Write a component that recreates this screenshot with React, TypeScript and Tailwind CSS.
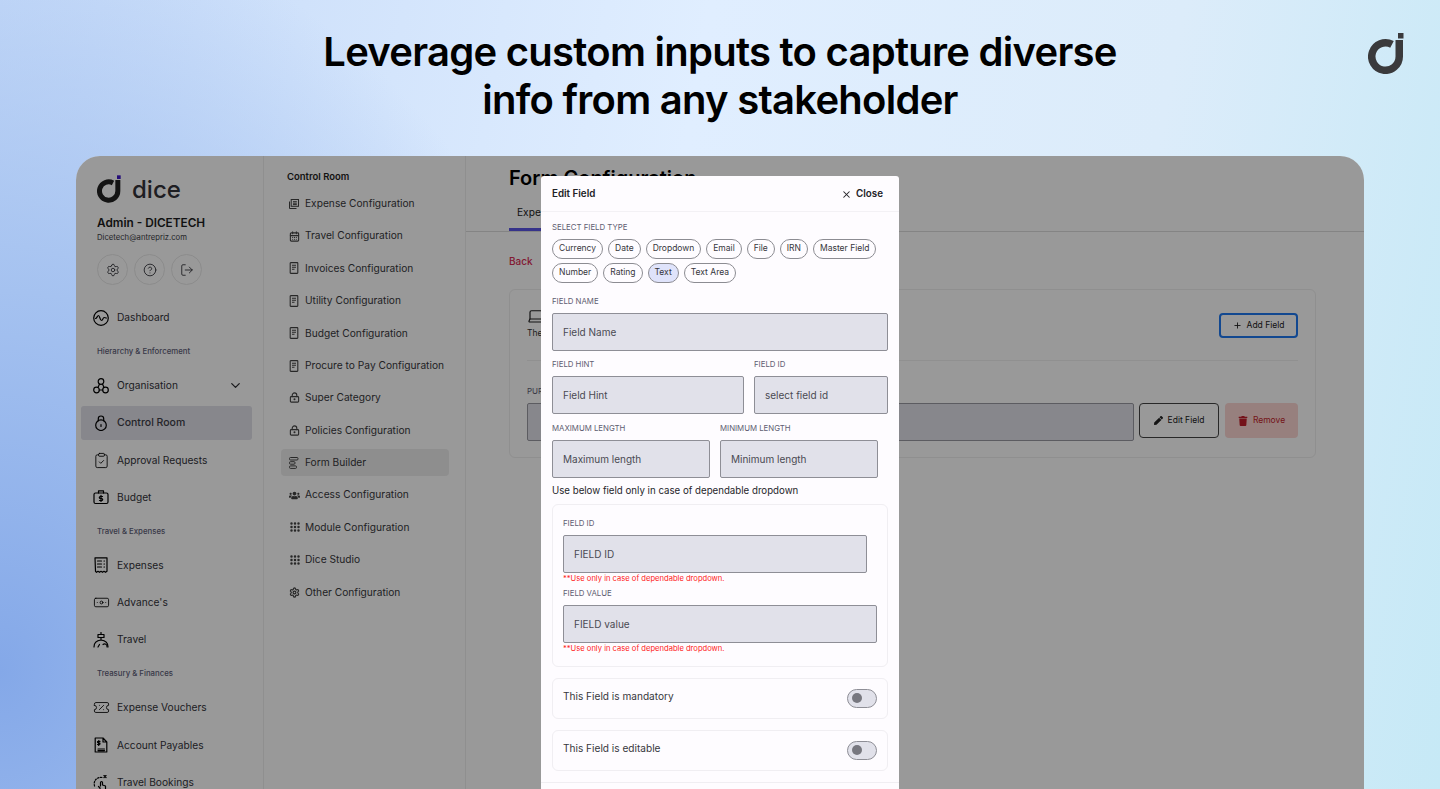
import type { ReactNode } from "react"
import {
  Settings,
  CircleHelp,
  LogOut,
  ChevronDown,
  ClipboardCheck,
  Banknote,
  TicketPercent,
  CalendarDays,
  LockKeyhole,
  Plus,
  X,
  Laptop,
} from "lucide-react"
import { FaUsers, FaPen, FaTrash } from "react-icons/fa"
import { TbGridDots } from "react-icons/tb"

function DiceMark({ className, dot }: { className: string; dot: string }) {
  return (
    <svg viewBox="0 0 36 41" className={className} fill="none">
      <path d="M24 11.400A13.750 13.750 0 1 0 31.250 23.500V7" stroke="currentColor" strokeWidth="7.500" />
      <rect x="30" y="0" width="5.500" height="5.500" fill={dot} />
    </svg>
  )
}

const line = { fill: "none", stroke: "currentColor", strokeWidth: 1.2, strokeLinecap: "round" as const, strokeLinejoin: "round" as const }

function PulseIcon() {
  return (
    <svg viewBox="0 0 16 16" className="w-4 h-4 shrink-0" {...line}>
      <circle cx="8" cy="8" r="7.300" />
      <path d="M2.500 8.500c1.500-.2 1.800-3 3-3s1.500 5 3 5 1.500-3 2.500-3 1.500.5 2.500.5" />
    </svg>
  )
}

function OrgIcon() {
  return (
    <svg viewBox="0 0 16 16" className="w-4 h-4 shrink-0" {...line}>
      <circle cx="8" cy="3.500" r="2.800" />
      <circle cx="3.500" cy="12" r="2.800" />
      <circle cx="12.500" cy="12" r="2.800" />
      <path d="M6.500 6 5 9.500M9.500 6 11 9.500M6.300 12h3.400" />
    </svg>
  )
}

function RoundLockIcon() {
  return (
    <svg viewBox="0 0 16 16" className="w-4 h-4 shrink-0" {...line}>
      <circle cx="8" cy="10.200" r="5.300" />
      <path d="M5.300 5.800V3.700a2.700 2.700 0 0 1 5.400 0v2.100M8 9.500v2" />
    </svg>
  )
}

function BudgetIcon() {
  return (
    <svg viewBox="0 0 16 16" className="w-4 h-4 shrink-0" {...line}>
      <rect x="1" y="4" width="14" height="10.500" rx="1.500" />
      <path d="M5.500 4V1.800h5V4M8 6.300v6.200M9.500 7.500H7.300a1 1 0 0 0 0 2h1.400a1 1 0 0 1 0 2H6.500" />
    </svg>
  )
}

function ReceiptIcon() {
  return (
    <svg viewBox="0 0 16 16" className="w-4 h-4 shrink-0" {...line}>
      <path d="M2 .8h12v13.500l-1.500 1-1.500-1-1.500 1-1.500-1-1.500 1-1.500-1-1.500 1-1-1z" />
      <path d="M4.500 4h4M4.500 7h4M4.500 10h4M11 4h.5M11 7h.5M11 10h.5" />
    </svg>
  )
}

function SignIcon() {
  return (
    <svg viewBox="0 0 16 16" className="w-4 h-4 shrink-0" {...line}>
      <path d="M8 .5v2M5 2.500h6v3H5zM8 5.500v2.500M1 15c0-3.500 2-6.500 7-7 5 .5 7 3.500 7 7" />
      <path d="M10 12.500a2.500 2.500 0 0 1 4 2.500M6.500 12.500 5 15" />
    </svg>
  )
}

function PayablesIcon() {
  return (
    <svg viewBox="0 0 16 16" className="w-4 h-4 shrink-0" {...line}>
      <path d="M2.200 1h7.800l3.800 4v10H2.200zM10 1v4h3.800M5 12h6.500M5 13.600h6.500" />
      <path d="M7 4.300H5.300a.8.8 0 0 0 0 1.600h.9a.8.8 0 0 1 0 1.600H4.500M5.700 3.500v4.900" />
    </svg>
  )
}

function BookingIcon() {
  return (
    <svg viewBox="0 0 16 16" className="w-4 h-4 shrink-0" {...line}>
      <path d="M9 2.500A6.500 6.500 0 0 0 2 12" strokeDasharray="1.500 1.500" />
      <path d="M11 .5l2 2m0-2-2 2" />
      <path d="M7 15.500v-2.500L5.500 11.500M7.500 11V7.500a1 1 0 0 1 2 0V10l3 1v4.500" />
    </svg>
  )
}

function StackIcon() {
  return (
    <svg viewBox="0 0 10 10" className="w-2.5 h-2.5 shrink-0" fill="none" stroke="currentColor" strokeWidth="1">
      <rect x="2.200" y=".5" width="7.300" height="6.800" />
      <path d="M.5 2.500v7h7M4 2.700h3.800M4 4.200h3.800M4 5.600h3.800" />
    </svg>
  )
}

function DocIcon() {
  return (
    <svg viewBox="0 0 10 12" className="w-2.5 h-3 shrink-0" fill="none" stroke="currentColor" strokeWidth="1.100">
      <rect x="1.200" y=".6" width="7.600" height="10.800" rx=".6" />
      <path d="M3 3.200h4M3 5.200h4M3 7.200h2.500" />
    </svg>
  )
}

function FormIcon() {
  return (
    <svg viewBox="0 0 10 12" className="w-2.5 h-3 shrink-0" fill="none" stroke="currentColor" strokeWidth="1">
      <rect x=".5" y=".5" width="8.500" height="2.500" rx="1" />
      <rect x=".5" y="4.700" width="5.500" height="2.500" rx="1" />
      <rect x=".5" y="8.900" width="7" height="2.500" rx="1" />
    </svg>
  )
}

function SideItem({ icon, label, active, chevron }: { icon: ReactNode; label: string; active?: boolean; chevron?: boolean }) {
  return (
    <div className={`h-[34px] my-[1.650px] ml-[5px] w-[171px] flex items-center pl-3 pr-[9px] rounded-[3px] ${active ? "bg-[#e1e1e9]" : ""}`}>
      <span className="w-6 flex">{icon}</span>
      <span className={`flex-1 ${active ? "text-[10.500px] font-medium text-[#3c3c46]" : "text-[10.200px] text-[#33333a]"}`}>{label}</span>
      {chevron && <ChevronDown className="w-[15px] h-[15px] text-[#2c2c30]" />}
    </div>
  )
}

function SideLabel({ children }: { children: string }) {
  return <div className="h-[30.700px] pl-[21px] flex items-center text-[7.800px] font-medium text-[#5e5e78]">{children}</div>
}

function SubItem({ icon, label, active }: { icon: ReactNode; label: string; active?: boolean }) {
  return (
    <div className={`h-[27px] my-[2.700px] w-[168px] flex items-center pl-2 rounded-[4px] ${active ? "bg-[#ededed]" : ""}`}>
      <span className="w-4 flex items-center text-[#444]">{icon}</span>
      <span className="text-[10.200px] text-[#38383c]">{label}</span>
    </div>
  )
}

function Chip({ label, active }: { label: string; active?: boolean }) {
  return (
    <span className={`h-[19.500px] px-[6px] rounded-full border border-[#8c8c92] text-[8.500px] flex items-center text-[#36363c] ${active ? "bg-[#dfe3fb]" : ""}`}>
      {label}
    </span>
  )
}

function Field({ label, placeholder, width }: { label: string; placeholder: string; width: string }) {
  return (
    <div className={width}>
      <div className="h-[14px] flex items-center text-[7.800px] text-[#5e5e72]">{label}</div>
      <div className="mt-[4px] h-[38px] bg-[#e1e1ea] border border-[#8e8e96] rounded-[2px] flex items-center pl-[10px] pt-[1px] text-[10px] text-[#4a4a52]">
        {placeholder}
      </div>
    </div>
  )
}

function ToggleRow({ label }: { label: string }) {
  return (
    <div className="h-[41px] border border-[#f0eef2] rounded-[6px] flex items-center justify-between pl-[10px] pr-[10px]">
      <span className="text-[10.100px] text-[#37373d] -mt-[3px]">{label}</span>
      <span className="w-[30px] h-[19px] rounded-full bg-[#e1e1ea] border border-[#8e8e96] flex items-center pl-[4px]">
        <span className="w-[10px] h-[10px] rounded-full bg-[#77777f]" />
      </span>
    </div>
  )
}

export default function App() {
  return (
    <div
      className="relative w-[1440px] h-[789px] overflow-hidden font-['Inter',sans-serif] bg-[radial-gradient(ellipse_620px_760px_at_0%_85%,#84a8e8_0%,#a5c2f0_50%,rgba(200,222,250,0)_100%),linear-gradient(100deg,#c4d9f8_0%,#e0eeff_45%,#dcecfa_75%,#c6e9f6_100%)]"
    >
      <DiceMark className="absolute left-[1368px] top-[33px] w-9 h-[41px] text-[#3a3a3c]" dot="#3a3a3c" />

      <h1 className="pt-[28px] h-[156px] text-center text-[40px] leading-[48px] font-semibold text-black tracking-[-0.74px]">
        Leverage custom inputs to capture diverse
        <br />
        info from any stakeholder
      </h1>

      <div className="relative mx-[76px] h-[633px] rounded-t-[24px] bg-white overflow-hidden flex">
        {/* Main sidebar */}
        <aside className="w-[188px] shrink-0 border-r border-[#efefef]">
          <div className="pl-[21px] pt-[19px]">
            <div className="flex items-center h-[28px] text-[#222]">
              <DiceMark className="w-[24px] h-[28px]" dot="#3d16c8" />
              <span className="ml-[11px] mt-[1px] text-[24px] leading-none font-medium text-[#33333a]">dice</span>
            </div>
            <div className="mt-[13px] text-[11.800px] leading-[15px] font-semibold text-[#1c1c20]">Admin - DICETECH</div>
            <div className="mt-[1px] text-[7.700px] leading-[12px] text-[#3c3c44]">Dicetech@antrepriz.com</div>
            <div className="mt-[10px] flex gap-[6px]">
              {[Settings, CircleHelp, LogOut].map((Icon, i) => (
                <span key={i} className="w-[31px] h-[31px] rounded-full border border-[#e9e9e9] flex items-center justify-center">
                  <Icon className="w-[14px] h-[14px] text-[#33333a]" strokeWidth={1.500} />
                </span>
              ))}
            </div>
          </div>
          <div className="mt-[14px] flex flex-col">
            <SideItem icon={<PulseIcon />} label="Dashboard" />
            <SideLabel>Hierarchy &amp; Enforcement</SideLabel>
            <SideItem icon={<OrgIcon />} label="Organisation" chevron />
            <SideItem icon={<RoundLockIcon />} label="Control Room" active />
            <SideItem icon={<ClipboardCheck className="w-[17px] h-[17px]" strokeWidth={1.200} />} label="Approval Requests" />
            <SideItem icon={<BudgetIcon />} label="Budget" />
            <SideLabel>Travel &amp; Expenses</SideLabel>
            <SideItem icon={<ReceiptIcon />} label="Expenses" />
            <SideItem icon={<Banknote className="w-[17px] h-[17px]" strokeWidth={1.200} />} label="Advance's" />
            <SideItem icon={<SignIcon />} label="Travel" />
            <SideLabel>Treasury &amp; Finances</SideLabel>
            <SideItem icon={<TicketPercent className="w-[17px] h-[17px]" strokeWidth={1.200} />} label="Expense Vouchers" />
            <SideItem icon={<PayablesIcon />} label="Account Payables" />
            <SideItem icon={<BookingIcon />} label="Travel Bookings" />
          </div>
        </aside>

        {/* Control room nav */}
        <nav className="w-[202px] shrink-0 border-r border-[#efefef] pl-[17px] pt-[14px]">
          <div className="pl-[6px] h-[14px] flex items-center text-[9.500px] font-semibold text-[#1e1e22]">Control Room</div>
          <div className="mt-[3.500px] flex flex-col">
            <SubItem icon={<StackIcon />} label="Expense Configuration" />
            <SubItem icon={<CalendarDays className="w-[11px] h-[11px]" strokeWidth={2.400} />} label="Travel Configuration" />
            <SubItem icon={<DocIcon />} label="Invoices Configuration" />
            <SubItem icon={<DocIcon />} label="Utility Configuration" />
            <SubItem icon={<DocIcon />} label="Budget Configuration" />
            <SubItem icon={<DocIcon />} label="Procure to Pay Configuration" />
            <SubItem icon={<LockKeyhole className="w-[11px] h-[11px]" strokeWidth={2.400} />} label="Super Category" />
            <SubItem icon={<LockKeyhole className="w-[11px] h-[11px]" strokeWidth={2.400} />} label="Policies Configuration" />
            <SubItem icon={<FormIcon />} label="Form Builder" active />
            <SubItem icon={<FaUsers className="w-[11px] h-[11px]" />} label="Access Configuration" />
            <SubItem icon={<TbGridDots className="w-[12px] h-[12px]" strokeWidth={3} />} label="Module Configuration" />
            <SubItem icon={<TbGridDots className="w-[12px] h-[12px]" strokeWidth={3} />} label="Dice Studio" />
            <SubItem icon={<Settings className="w-[11px] h-[11px]" strokeWidth={2.600} />} label="Other Configuration" />
          </div>
        </nav>

        {/* Form configuration */}
        <main className="flex-1">
          <div className="h-[76px] border-b border-[#dcdcdc] pl-[43px]">
            <div className="pt-[8px] text-[20px] leading-[28px] font-semibold text-black">Form Configuration</div>
            <div className="mt-[13px] w-[60px] h-[26px] border-b-[3px] border-[#5a55e6] pl-[8px] text-[10.200px] text-[#222]">Expense</div>
          </div>
          <div className="pl-[43px] pr-[49px]">
            <div className="pt-[22px] h-[57px] text-[10px] font-medium text-[#d92c55]">Back</div>
            <div className="h-[169px] border border-[#efefef] rounded-[6px] px-[17px]">
              <div className="h-[71px] border-b border-[#f0f0f0] flex justify-between">
                <div className="pt-[17px]">
                  <Laptop className="w-[18px] h-[18px] text-[#222]" strokeWidth={1.600} />
                  <div className="mt-[2px] text-[8.500px] text-[#333]">The</div>
                </div>
                <div className="mt-[23px] w-[79px] h-[25px] border-2 border-[#1f78f0] rounded-[4px] flex items-center justify-center gap-[5px] text-[8.500px] text-[#222]">
                  <Plus className="w-[9px] h-[9px]" strokeWidth={2.400} /> Add Field
                </div>
              </div>
              <div className="mt-[24px] text-[8px] leading-[12px] text-[#5e5e72]">PUR</div>
              <div className="mt-[6px] flex">
                <div className="w-[607px] h-[38px] bg-[#e1e1ea] border border-[#9a9aa2] rounded-[2px]" />
                <div className="ml-[5px] w-[80px] h-[35px] border border-[#444] rounded-[4px] flex items-center justify-center gap-[5px] text-[8.500px] text-[#222]">
                  <FaPen className="w-[9px] h-[9px]" /> Edit Field
                </div>
                <div className="ml-[6px] w-[73px] h-[35px] bg-[#fcd5d2] rounded-[4px] flex items-center justify-center gap-[5px] text-[8.500px] text-[#c21f2a]">
                  <FaTrash className="w-[10px] h-[10px]" /> Remove
                </div>
              </div>
            </div>
          </div>
        </main>

        <div className="absolute inset-0 bg-black/40" />

        {/* Edit field modal */}
        <div className="absolute left-[465px] top-[20px] w-[358px] h-[640px] bg-[#fefcff] rounded-t-[3px]">
          <div className="h-[36px] pt-[1px] border-b border-[#f3f1f5] flex items-center justify-between pl-[11px] pr-[16px]">
            <span className="text-[9.800px] font-semibold text-[#222226]">Edit Field</span>
            <span className="flex items-center gap-[4px] text-[9.800px] font-semibold text-[#222226]">
              <X className="w-[11px] h-[11px]" strokeWidth={2.200} /> Close
            </span>
          </div>
          <div className="pl-[11px] pr-[11px] pt-[9px]">
            <div className="h-[14px] flex items-center text-[7.800px] text-[#5e5e72]">SELECT FIELD TYPE</div>
            <div className="mt-[4px] flex flex-wrap gap-x-[5px] gap-y-[4.500px] w-[330px]">
              {["Currency", "Date", "Dropdown", "Email", "File", "IRN", "Master Field", "Number", "Rating"].map((c) => (
                <Chip key={c} label={c} />
              ))}
              <Chip label="Text" active />
              <Chip label="Text Area" />
            </div>
            <Field label="FIELD NAME" placeholder="Field Name" width="w-[336px] mt-[12px]" />
            <div className="flex gap-[10px] mt-[7px]">
              <Field label="FIELD HINT" placeholder="Field Hint" width="w-[192px]" />
              <Field label="FIELD ID" placeholder="select field id" width="w-[134px]" />
            </div>
            <div className="flex gap-[10px] mt-[8px]">
              <Field label="MAXIMUM LENGTH" placeholder="Maximum length" width="w-[158px]" />
              <Field label="MINIMUM LENGTH" placeholder="Minimum length" width="w-[158px]" />
            </div>
            <div className="mt-[7px] h-[14px] flex items-center text-[9.700px] text-[#26262a]">Use below field only in case of dependable dropdown</div>
            <div className="mt-[5px] w-[336px] h-[163px] border border-[#f0eef2] rounded-[6px] pl-[10px] pt-[12px]">
              <Field label="FIELD ID" placeholder="FIELD ID" width="w-[304px]" />
              <div className="h-[13px] flex items-center text-[7.600px] text-[#ff1a1a]">**Use only in case of dependable dropdown.</div>
              <Field label="FIELD VALUE" placeholder="FIELD value" width="w-[314px] mt-[1px]" />
              <div className="h-[13px] flex items-center text-[7.600px] text-[#ff1a1a]">**Use only in case of dependable dropdown.</div>
            </div>
            <div className="mt-[11px] w-[336px] flex flex-col gap-[11px]">
              <ToggleRow label="This Field is mandatory" />
              <ToggleRow label="This Field is editable" />
            </div>
          </div>
          <div className="mt-[11px] border-t border-[#f0eef2]" />
        </div>
      </div>
    </div>
  )
}
